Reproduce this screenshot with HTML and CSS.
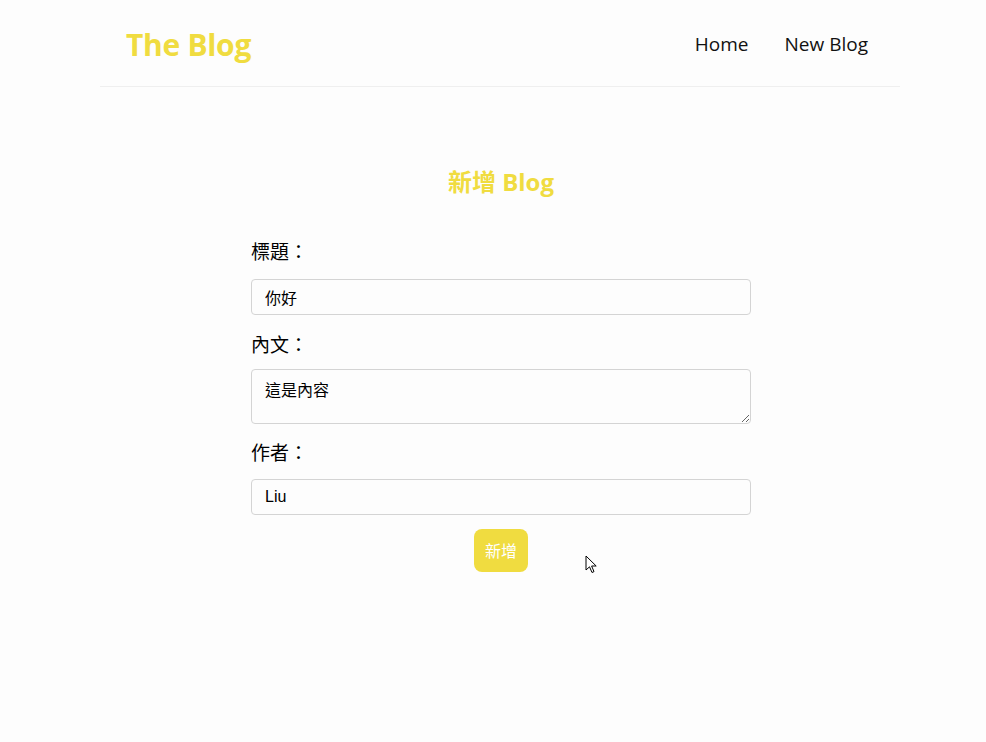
FILE: index.html
```html
<!DOCTYPE html>
<html lang="zh-Hant">
<head>
<meta charset="utf-8">
<title>The Blog</title>
<link rel="stylesheet" href="styles.css">
</head>
<body>
<div class="app">
  <nav class="navbar">
    <h1 class="brand">The Blog</h1>
    <div class="links">
      <a href="#">Home</a>
      <a href="#">New Blog</a>
    </div>
  </nav>
  <main class="content">
    <div class="create">
      <h2 class="title">新增 Blog</h2>
      <form class="form">
        <label class="label">標題：</label>
        <input class="field field-title" type="text" value="你好">
        <label class="label">內文：</label>
        <textarea class="field area">這是內容</textarea>
        <label class="label label-author">作者：</label>
        <input class="field" type="text" value="Liu">
        <button class="btn" type="button">新增</button>
      </form>
    </div>
  </main>
</div>
<svg class="cursor" width="14" height="20" viewBox="0 0 14 20"><path d="M1 1 L1 15 L4.5 11.8 L7 17.5 L9 16.6 L6.6 11 L11.2 11 Z" fill="#fff" stroke="#000" stroke-width="1" stroke-linejoin="round"/></svg>
</body>
</html>
```
FILE: styles.css
```css
html, body {
  margin: 0;
  padding: 0;
  background: #fdfdfd;
}
body {
  font-family: "Open Sans", "Noto Sans CJK TC", sans-serif;
  color: #111;
  position: relative;
  min-height: 742px;
}
.app {
  width: 800px;
  margin-left: 100px;
}
.navbar {
  display: flex;
  align-items: center;
  justify-content: space-between;
  height: 87px;
  padding: 0 26px;
  box-sizing: border-box;
  border-bottom: 1px solid #efefef;
}
.brand {
  margin: 2px 0 0;
  font-size: 30px;
  font-weight: 700;
  color: #f0dc40;
  letter-spacing: -0.3px;
}
.links {
  display: flex;
  gap: 36px;
  margin-right: 6px;
  padding-top: 2px;
}
.links a {
  font-size: 19px;
  color: #111;
  text-decoration: none;
}
.content {
  display: flex;
  justify-content: center;
  padding-left: 2px;
}
.create {
  width: 500px;
  padding-top: 78px;
}
.title {
  margin: 0 0 40px;
  text-align: center;
  font-size: 24px;
  line-height: 34px;
  font-weight: 700;
  color: #f0dc40;
}
.form {
  display: flex;
  flex-direction: column;
}
.label {
  font-family: "Noto Sans CJK TC", sans-serif;
  font-size: 19px;
  line-height: 24px;
  margin: 17px 0 15px;
  color: #000;
}
.label:first-child {
  margin-top: 0;
}
.label-author {
  margin-top: 16px;
  margin-bottom: 15px;
}
.field {
  box-sizing: border-box;
  width: 100%;
  height: 36px;
  margin: 0;
  padding: 6px 13px;
  border: 1px solid #d4d4d4;
  border-radius: 4px;
  background: #fdfdfd;
  font-family: "Liberation Sans", "Noto Sans CJK TC", sans-serif;
  font-size: 16px;
  color: #000;
}
.field-title {
  margin-top: 1px;
}
.area {
  height: 55px;
  margin-top: -2px;
  padding-top: 7px;
  resize: vertical;
}
.btn {
  align-self: center;
  margin-top: 14px;
  padding: 8px 11px;
  border: 0;
  border-radius: 8px;
  background: #f0dc40;
  color: #fff;
  font-family: "Noto Sans CJK TC", sans-serif;
  font-size: 16px;
  line-height: 27px;
}
.cursor {
  position: absolute;
  left: 585px;
  top: 555px;
}
```
